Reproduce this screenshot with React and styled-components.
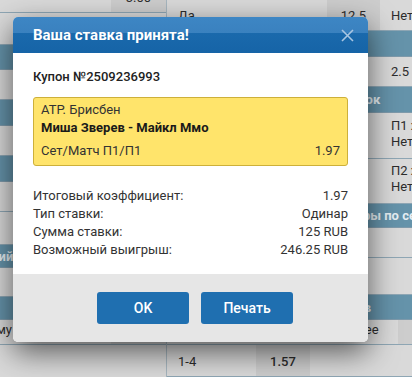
import React from "react";
import styled, { createGlobalStyle } from "styled-components";

const GlobalStyle = createGlobalStyle`
  html, body {
    margin: 0;
    padding: 0;
  }
  body {
    font-family: Roboto, "Noto Sans", Arial, sans-serif;
    background: #d8d8d8;
    overflow: hidden;
  }
`;

// background page (already dimmed by the backdrop)
const leftRows = [
  { h: 25, cells: [{ flex: true }, { w: 55, dark: true, text: "3.00" }] },
  { h: 32, cells: [{ flex: true }] },
  { h: 25, header: " " },
  { h: 30, cells: [{ flex: true }] },
  { h: 26, header: " " },
  { h: 30, cells: [{ flex: true }] },
  { h: 26, header: " " },
  { h: 30, cells: [{ flex: true }] },
  { h: 33, cells: [{ flex: true }] },
  { h: 23, header: "Тотал общий", indent: 14 },
  { h: 29, cells: [{ flex: true }] },
  { h: 23, header: " " },
  { h: 25, cells: [{ flex: true, text: "По общему", pad: 24 }, { w: 55, dark: true, text: "3.40" }] },
  { h: 40, cells: [{ flex: true }] },
];

const rightRows = [
  {
    h: 43,
    cells: [
      { w: 160, text: "Да" },
      { w: 53, dark: true, text: "12.5" },
      { flex: true, text: "Нет" },
    ],
  },
  { h: 26, header: "Победа в сете", indent: 11 },
  { h: 30, cells: [{ w: 160 }, { w: 53 }, { flex: true, text: "2.5 Больше" }] },
  { h: 26, header: "Фора игрок", indent: 143 },
  { h: 46, cells: [{ w: 160 }, { w: 53 }, { flex: true, lines: ["П1 хозяин", "Нет"] }] },
  { h: 45, cells: [{ w: 160 }, { w: 53 }, { flex: true, lines: ["П2 хозяин", "Нет"] }] },
  { h: 24, header: "Форы по сетам", indent: 178 },
  { h: 30, cells: [{ flex: true }] },
  { h: 37, cells: [{ flex: true }] },
  { h: 25, header: "Тотал сетов", indent: 131 },
  { h: 25, cells: [{ w: 161 }, { w: 70, text: "Менее" }, { flex: true, dark: true }] },
  {
    h: 32,
    cells: [
      { w: 89, text: "1-4" },
      { w: 54, dark: true, text: "1.57", bold: true },
      { flex: true },
    ],
  },
];

const summary = [
  ["Итоговый коэффициент:", "1.97"],
  ["Тип ставки:", "Одинар"],
  ["Сумма ставки:", "125 RUB"],
  ["Возможный выигрыш:", "246.25 RUB"],
];

function Column({ rows, width }) {
  return (
    <Col $width={width}>
      {rows.map((row, i) =>
        row.header ? (
          <HeaderRow key={i} $h={row.h} $indent={row.indent || 0}>
            {row.header}
          </HeaderRow>
        ) : (
          <Row key={i} $h={row.h}>
            {row.cells.map((c, j) => (
              <Cell
                key={j}
                $w={c.w}
                $flex={c.flex}
                $dark={c.dark}
                $bold={c.bold}
                $pad={c.pad}
              >
                {c.lines ? (
                  <Lines>
                    {c.lines.map((l) => (
                      <span key={l}>{l}</span>
                    ))}
                  </Lines>
                ) : (
                  c.text
                )}
              </Cell>
            ))}
          </Row>
        )
      )}
    </Col>
  );
}

function CloseIcon() {
  return (
    <svg width="13" height="13" viewBox="0 0 13 13">
      <path
        d="M1 1 L12 12 M12 1 L1 12"
        stroke="#a9c6e2"
        strokeWidth="1.6"
        fill="none"
      />
    </svg>
  );
}

export default function App() {
  return (
    <>
      <GlobalStyle />
      <Screen>
        <Page>
          <Column rows={leftRows} width={246} />
          <Column rows={rightRows} />
        </Page>

        <Modal>
          <ModalHeader>
            <ModalTitle>Ваша ставка принята!</ModalTitle>
            <CloseButton>
              <CloseIcon />
            </CloseButton>
          </ModalHeader>

          <ModalBody>
            <Coupon>Купон №2509236993</Coupon>
            <EventBox>
              <Tournament>ATP. Брисбен</Tournament>
              <Players>Миша Зверев - Майкл Ммо</Players>
              <BetLine>
                <span>Сет/Матч П1/П1</span>
                <span>1.97</span>
              </BetLine>
            </EventBox>

            <Summary>
              {summary.map(([label, value]) => (
                <SummaryRow key={label}>
                  <span>{label}</span>
                  <span>{value}</span>
                </SummaryRow>
              ))}
            </Summary>
          </ModalBody>

          <ModalFooter>
            <FooterButton>OK</FooterButton>
            <FooterButton>Печать</FooterButton>
          </ModalFooter>
        </Modal>
      </Screen>
    </>
  );
}

/* Styled Components */

const Screen = styled.div`
  position: relative;
  width: 412px;
  height: 377px;
  overflow: hidden;
  background: #d8d8d8;
`;

const Page = styled.div`
  display: flex;
  margin: -12px 0 0 -80px;
  color: #2c2c2c;
  font-size: 13px;
`;

const Col = styled.div`
  display: flex;
  flex-direction: column;
  width: ${(p) => (p.$width ? `${p.$width}px` : "auto")};
  flex: ${(p) => (p.$width ? "none" : "1")};
  border-right: 1px solid #a7b6bf;
`;

const Row = styled.div`
  display: flex;
  height: ${(p) => p.$h}px;
  border-bottom: 1px solid #8ea6b4;
  box-sizing: border-box;
  background: #d9d9d9;
`;

const Cell = styled.div`
  display: flex;
  align-items: flex-end;
  padding-bottom: 6px;
  box-sizing: border-box;
  width: ${(p) => (p.$w ? `${p.$w}px` : "auto")};
  flex: ${(p) => (p.$flex ? "1" : "none")};
  background: ${(p) => (p.$dark ? "#cdcdcd" : "transparent")};
  justify-content: ${(p) => (p.$dark ? "center" : "flex-start")};
  padding-left: ${(p) => (p.$dark ? 0 : p.$pad ?? 11)}px;
  font-weight: ${(p) => (p.$bold ? 500 : 400)};
  white-space: nowrap;
  overflow: hidden;
  line-height: 16px;
`;

const Lines = styled.div`
  display: flex;
  flex-direction: column;
  padding-bottom: 2px;
`;

const HeaderRow = styled.div`
  display: flex;
  align-items: center;
  height: ${(p) => p.$h}px;
  padding-left: ${(p) => p.$indent}px;
  box-sizing: border-box;
  background: #6593aa;
  color: #e4edf2;
  font-weight: 700;
  font-size: 13px;
  white-space: pre;
  border-bottom: 1px solid #7e9aab;
`;

const Modal = styled.div`
  position: absolute;
  left: 13px;
  top: 17px;
  width: 355px;
  border-radius: 5px;
  overflow: hidden;
  background: #fff;
  box-shadow: 0 10px 30px rgba(0, 0, 0, 0.6);
`;

const ModalHeader = styled.div`
  display: flex;
  align-items: center;
  justify-content: space-between;
  height: 36px;
  padding: 0 14px 0 20px;
  background: linear-gradient(
    to bottom,
    #3d86c4 0%,
    #3a81bf 45%,
    #1a69ac 45%,
    #1664a7 100%
  );
`;

const ModalTitle = styled.div`
  color: #fff;
  font-size: 15px;
  font-weight: 700;
`;

const CloseButton = styled.div`
  display: flex;
  align-items: center;
  justify-content: center;
  width: 13px;
  height: 13px;
  cursor: pointer;
`;

const ModalBody = styled.div`
  padding: 15px 20px 15px;
  color: #333;
  font-size: 13px;
  line-height: 18px;
`;

const Coupon = styled.div`
  font-weight: 500;
  color: #222;
`;

const EventBox = styled.div`
  margin-top: 11px;
  padding: 3px 7px 5px;
  border: 1px solid #cdb03a;
  border-radius: 3px;
  background: #ffe46b;
  color: #333;
`;

const Tournament = styled.div``;

const Players = styled.div`
  font-weight: 700;
  color: #1a1a1a;
`;

const BetLine = styled.div`
  display: flex;
  justify-content: space-between;
  margin-top: 5px;
`;

const Summary = styled.div`
  margin-top: 21px;
`;

const SummaryRow = styled.div`
  display: flex;
  justify-content: space-between;
`;

const ModalFooter = styled.div`
  display: flex;
  justify-content: center;
  gap: 12px;
  padding: 18px 0 18px 9px;
  background: #e6e6e6;
`;

const FooterButton = styled.button`
  width: 92px;
  height: 32px;
  border: none;
  border-radius: 3px;
  background: #1f6fb0;
  color: #fff;
  font-family: Roboto, Arial, sans-serif;
  font-size: 14px;
  font-weight: 500;
  cursor: pointer;
`;
